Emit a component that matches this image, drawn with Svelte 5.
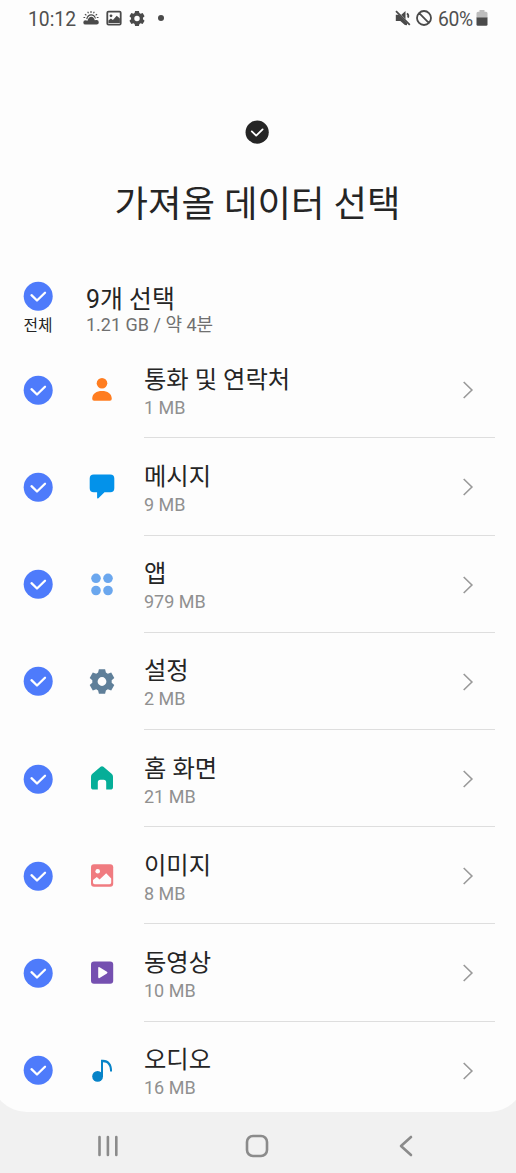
<script lang="ts">
  type Item = { name: string; size: string; icon: string };

  const items: Item[] = [
    { name: '통화 및 연락처', size: '1 MB', icon: 'contact' },
    { name: '메시지', size: '9 MB', icon: 'message' },
    { name: '앱', size: '979 MB', icon: 'apps' },
    { name: '설정', size: '2 MB', icon: 'settings' },
    { name: '홈 화면', size: '21 MB', icon: 'home' },
    { name: '이미지', size: '8 MB', icon: 'image' },
    { name: '동영상', size: '10 MB', icon: 'video' },
    { name: '오디오', size: '16 MB', icon: 'audio' }
  ];
</script>

{#snippet check()}
  <svg class="check" viewBox="0 0 30 30" aria-hidden="true">
    <circle cx="15.2" cy="15.2" r="14.5" />
    <path d="M8.5 14.2l5.500 5.300 8-7.800" />
  </svg>
{/snippet}

{#snippet gear()}
  <path
    fill-rule="evenodd"
    d="M9.900 1.200h6.200l.8 3.400 1.900 1.100 3.400-1.100 3.100 5.400-2.600 2.300v2.400l2.600 2.300-3.100 5.400-3.400-1.100-1.900 1.100-.8 3.400H9.900l-.8-3.400-1.900-1.100-3.400 1.100L.7 17l2.600-2.300v-2.400L.7 10l3.100-5.400 3.400 1.100 1.900-1.100zM13 9.100a4.400 4.400 0 1 0 0 8.800 4.400 4.400 0 0 0 0-8.800z"
  />
{/snippet}

<div class="phone">
  <main class="panel">
    <header class="status">
      <span class="clock">10:12</span>
      <svg class="weather" width="16" height="16" viewBox="0 0 16 16">
        <path d="M2.500 14.600a2.200 2.200 0 0 1 0-4.400q1.200 0 2 .5Q5.600 6.800 8.300 6.800q2.600 0 3.500 3.500.6-.4 1.600-.3a2.200 2.200 0 0 1 .2 4.600z" />
        <path d="M3.200 9Q4 4.200 8.200 4.200q3.700 0 4.700 4l-.9.600Q10.800 5.600 8.300 5.600q-3 0-4 3.600z" />
        <path
          class="line"
          d="M8 1v2M4.700 1.700l.8 1.600M11.300 1.700l-.8 1.600M1.900 4.200l1.500 1M14.100 4.200l-1.500 1M.5 7.500h1.700M13.800 7.500h1.700"
        />
      </svg>
      <svg class="photo" width="16" height="16" viewBox="0 0 16 16">
        <rect class="frame" x="1.300" y="1.600" width="13.400" height="13" rx="1.200" />
        <circle cx="5" cy="5.800" r="1.400" />
        <path d="M2.400 13v-2.500l2.500-2 2 1.600 3.800-4.400 3.200 2.800V13z" />
      </svg>
      <svg class="cog" width="16" height="17" viewBox="0 0 26 27">{@render gear()}</svg>
      <i class="more"></i>
      <svg class="mute" width="16" height="16" viewBox="0 0 16 16">
        <path d="M.8 4.800h3L12 13v2.200l-2.100-.2-4.600-4.100H.8zM6.300 4.800 10.500 1v8.200z" />
        <path class="line" d="M1 1.200l13.800 13.600M12 3.400q2 1.600 1 4.200" />
      </svg>
      <svg class="blocked" width="16" height="16" viewBox="0 0 16 16">
        <path class="line" d="M8 1a7 7 0 1 0 0 14A7 7 0 0 0 8 1zM3.200 3.200l9.600 9.600" />
      </svg>
      <span class="percent">60%</span>
      <svg class="battery" width="12" height="16" viewBox="0 0 12 16">
        <path class="dim" d="M3.500 0h5v1.800H10q1.500 0 1.500 1.500V8H.5V3.300Q.5 1.800 2 1.800h1.500z" />
        <path d="M.5 7.500h11v7q0 1.300-1.300 1.300H1.800Q.5 15.800.5 14.500z" />
      </svg>
    </header>

    <section class="hero">
      <div class="badge">{@render check()}</div>
      <h1>가져올 데이터 선택</h1>
    </section>

    <section class="summary">
      <div class="all">
        {@render check()}
        <span>전체</span>
      </div>
      <div class="total">
        <strong>9개 선택</strong>
        <small>1.21 GB / 약 4분</small>
      </div>
    </section>

    <ul>
      {#each items as item}
        <li>
          {@render check()}
          <svg class="icon {item.icon}" width="26" height="27" viewBox="0 0 26 27">
            {#if item.icon === 'contact'}
              <circle cx="13" cy="7.300" r="5.300" />
              <path d="M3.200 22.800C3.400 17.500 7.500 15 13 15s9.600 2.500 9.800 7.800q0 1.900-1.900 1.900H5.100q-1.900 0-1.900-1.900z" />
            {:else if item.icon === 'message'}
              <path d="M4.700 1.500h16.600q4 0 4 4v9.800q0 4-4 4h-5.800l-6.100 5.900q-1.300.9-1.300-.7v-5.200H4.700q-4 0-4-4V5.500q0-4 4-4z" />
            {:else if item.icon === 'apps'}
              <circle cx="7" cy="7.300" r="4.800" />
              <circle cx="19" cy="7.300" r="4.800" />
              <circle cx="7" cy="19.500" r="4.800" />
              <circle cx="19" cy="19.500" r="4.800" />
            {:else if item.icon === 'settings'}
              {@render gear()}
            {:else if item.icon === 'home'}
              <path d="M11.600 1.800q1.400-1.100 2.800 0l8.200 6.900q1.400 1.200 1.400 3v10.200q0 2.700-2.700 2.700h-4.100v-7.200q0-2.600-2.600-2.600h-3.200q-2.600 0-2.600 2.600v7.200H4.700Q2 24.600 2 21.900V11.700q0-1.800 1.400-3z" />
            {:else if item.icon === 'image'}
              <rect x="2" y="2.200" width="22.200" height="22.600" rx="3" />
              <circle class="cut" cx="8.700" cy="9.200" r="2.300" />
              <path class="cut" d="M4 20.500v-2.600l3.800-3 2.800 2.500 6.600-6.200 5 5.300v4q0 1.700-1.700 1.700H5.700Q4 22.200 4 20.500z" />
            {:else if item.icon === 'video'}
              <rect x="2" y="2.400" width="22.200" height="22.400" rx="3" />
              <path class="cut" d="M9.200 9.100q0-1.600 1.400-.8l7.300 4.500q1.300.8 0 1.600l-7.300 4.500q-1.400.8-1.400-.8z" />
            {:else}
              <circle cx="8.600" cy="19.400" r="5.400" />
              <path d="M12 19.500V2.700h2c5.800 0 9.500 4.500 9 11.800h-1.900c.1-6-2.600-9.300-7.100-9.300v14.300z" />
            {/if}
          </svg>
          <div class="body">
            <div class="text">
              <span class="name">{item.name}</span>
              <span class="size">{item.size}</span>
            </div>
            <svg class="arrow" width="12" height="20" viewBox="0 0 12 20">
              <path d="M1.700 2l8.200 8-8.200 8" />
            </svg>
          </div>
        </li>
      {/each}
    </ul>
  </main>

  <nav>
    <svg width="22" height="24" viewBox="0 0 22 24">
      <path d="M2.500 3v18M10.900 3v18M19.300 3v18" />
    </svg>
    <svg width="24" height="24" viewBox="0 0 24 24">
      <rect x="2" y="2" width="20" height="20" rx="6" />
    </svg>
    <svg width="16" height="24" viewBox="0 0 16 24">
      <path d="M13 3l-10 9 10 9" />
    </svg>
  </nav>
</div>

<style>
  :global(body) {
    margin: 0;
    background: #f1f1f1;
  }

  .phone {
    width: 516px;
    height: 1173px;
    overflow: hidden;
    background: #f1f1f1;
    color: #252525;
    font-family: Roboto, 'Noto Sans CJK KR', sans-serif;
  }

  /* slightly wider than the screen so only part of each rounded corner shows */
  .panel {
    box-sizing: border-box;
    height: 1112px;
    margin: 0 -9px;
    padding: 0 9px;
    border-radius: 0 0 36px 36px;
    background: #fdfdfd;
    overflow: hidden;
  }

  .status {
    display: flex;
    align-items: center;
    height: 36px;
    padding: 0 28px;
    color: #505050;
    fill: #4a4a4a;
    font-size: 19.3px;
  }

  .status .line,
  .status .frame {
    fill: none;
    stroke: #4a4a4a;
    stroke-width: 1.8;
  }

  .status .weather .line {
    stroke-width: 1.1;
  }

  .clock {
    width: 55px;
    padding-top: 3px;
  }

  .photo {
    margin-left: 7px;
  }

  .cog {
    margin-left: 7px;
  }

  .more {
    width: 6px;
    height: 6px;
    margin-left: 13px;
    border-radius: 50%;
    background: #4a4a4a;
  }

  .mute {
    margin-left: auto;
  }

  .blocked {
    margin: 0 6px 0 5px;
  }

  .percent {
    width: 38px;
    padding-top: 3px;
    letter-spacing: -0.3px;
  }

  .battery .dim {
    fill: #bdbdbd;
  }

  .hero {
    display: flex;
    flex-direction: column;
    align-items: center;
    height: 245px;
    padding-top: 84px;
    box-sizing: border-box;
  }

  .badge {
    height: 24px;
    margin-right: 2px;
  }

  .badge .check {
    width: 24px;
    height: 24px;
    fill: #252525;
  }

  h1 {
    margin: 36px 1px 0 0;
    font-size: 36.4px;
    font-weight: 400;
    line-height: 50px;
    white-space: nowrap;
  }

  .check {
    display: block;
    flex: none;
    width: 30px;
    height: 30px;
    fill: #4e7bfb;
  }

  .check path {
    fill: none;
    stroke: #fff;
    stroke-width: 2.3;
    stroke-linecap: round;
    stroke-linejoin: round;
  }

  .summary {
    display: flex;
    height: 60.2px;
    padding-left: 23px;
  }

  .all {
    display: flex;
    flex-direction: column;
    align-items: center;
    width: 30px;
    font-size: 15.8px;
    line-height: 20px;
    white-space: nowrap;
  }

  .all span {
    margin-top: 5px;
  }

  .total {
    display: flex;
    flex-direction: column;
    margin-left: 33px;
    padding-top: 3px;
  }

  .total strong {
    font-size: 24.9px;
    font-weight: 400;
    line-height: 32px;
  }

  .total small {
    margin-top: -3px;
    color: #707070;
    font-size: 18px;
    line-height: 24px;
  }

  ul {
    margin: 0;
    padding: 0;
    list-style: none;
  }

  li {
    display: flex;
    align-items: center;
    height: 97.2px;
    padding: 0 21px 0 23px;
  }

  .icon {
    flex: none;
    margin: 0 29px 0 36px;
  }

  .body {
    display: flex;
    flex: 1;
    align-items: center;
    justify-content: space-between;
    box-sizing: border-box;
    height: 100%;
    padding: 2px 21px 0 0;
    border-bottom: 1px solid #dedede;
  }

  li:last-child .body {
    border-color: transparent;
  }

  .text {
    display: flex;
    flex-direction: column;
    padding-top: 3px;
  }

  .name {
    font-size: 24.3px;
    line-height: 32px;
    white-space: nowrap;
  }

  .size {
    color: #909090;
    font-size: 18px;
    line-height: 24px;
  }

  .arrow path {
    fill: none;
    stroke: #999;
    stroke-width: 1.6;
  }

  .cut {
    fill: #fdfdfd;
  }

  .contact {
    fill: #ff7d20;
  }

  .message {
    fill: #0392ea;
  }

  .apps {
    fill: #6ba7ee;
  }

  .settings {
    fill: #5f7f99;
  }

  .home {
    fill: #05ae98;
  }

  .image {
    fill: #f07b80;
  }

  .video {
    fill: #7550b0;
  }

  .audio {
    fill: #0783c8;
  }

  nav {
    display: flex;
    align-items: center;
    justify-content: space-between;
    box-sizing: border-box;
    height: 61px;
    padding: 7px 102px 0 97px;
  }

  nav svg {
    fill: none;
    stroke: #8b8b8b;
    stroke-width: 2.6;
    stroke-linecap: round;
    stroke-linejoin: round;
  }

  nav svg:nth-child(2) {
    margin-right: 4px;
  }
</style>
